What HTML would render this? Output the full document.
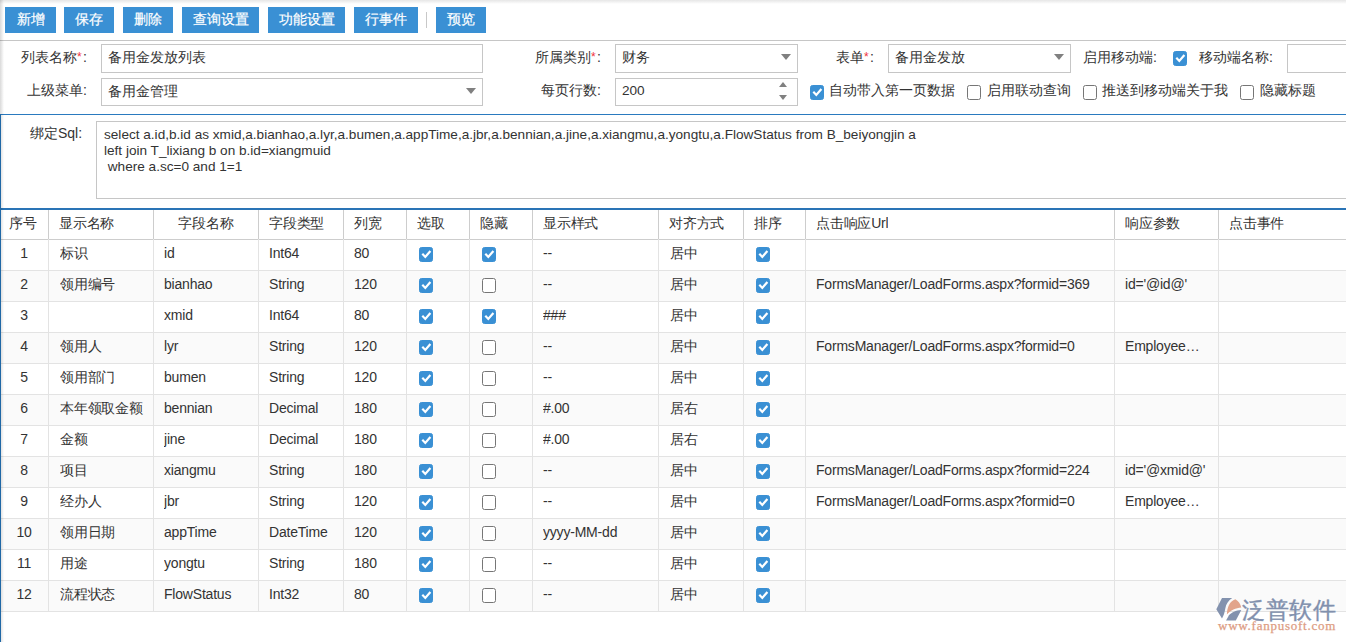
<!DOCTYPE html>
<html><head><meta charset="utf-8"><style>
html,body{margin:0;padding:0;}
body{width:1346px;height:642px;overflow:hidden;position:relative;background:#fff;font-family:"Liberation Sans",sans-serif;color:#333;font-size:14px;}
.a{position:absolute;white-space:nowrap;}
.shtop{position:absolute;left:0;top:0;width:1346px;height:4px;background:linear-gradient(#e6e6e6,#fff);}
.shleft{position:absolute;left:0;top:0;width:5px;height:642px;background:linear-gradient(90deg,rgba(0,0,0,0.15),rgba(0,0,0,0) 80%);}
.btn{position:absolute;top:7px;height:26px;line-height:24px;background:#3a90d4;color:#fff;text-align:center;font-size:14px;white-space:nowrap;-webkit-text-stroke:0.2px #fff;}
.tsep{position:absolute;top:12px;width:1px;height:16px;background:#c8c8c8;}
.hr{position:absolute;left:0;top:40px;width:1346px;height:1px;background:#c6c6c6;}
.lbl{position:absolute;white-space:nowrap;font-size:14px;color:#333;text-align:right;}
.req{color:#f0323c;font-size:12px;margin-left:0px;margin-right:1.5px;position:relative;top:-1px;}
.inp{position:absolute;box-sizing:border-box;border:1px solid #c6c6c6;background:#fff;white-space:nowrap;font-size:14px;color:#333;}
.tri{position:absolute;width:0;height:0;border-left:5px solid transparent;border-right:5px solid transparent;border-top:6px solid #808080;}
.triu{position:absolute;width:0;height:0;border-left:4px solid transparent;border-right:4px solid transparent;border-bottom:5px solid #808080;}
.trid{position:absolute;width:0;height:0;border-left:4px solid transparent;border-right:4px solid transparent;border-top:5px solid #808080;}
.cb{display:inline-block;box-sizing:border-box;width:14px;height:15px;border:1px solid #767676;border-radius:2.5px;background:#fff;vertical-align:top;position:relative;}
.cb.on{background:#3a90d4;border-color:#3a90d4;}
.cb svg{position:absolute;left:-1px;top:-1px;}
.c{position:absolute;white-space:nowrap;overflow:hidden;font-size:14px;letter-spacing:-0.2px;color:#333;}
.c .cb{margin-top:7px;}
.hd{font-size:14px;}
.ctr{text-align:center;}
.hl{position:absolute;left:0;width:1346px;height:1px;background:#e3e3e3;}
.vl{position:absolute;width:1px;background:#e3e3e3;}
.stripe{position:absolute;left:0;width:1346px;height:30px;background:#fafafa;}
.sql{font-size:13.6px;line-height:16px;color:#333;}
</style></head><body>
<div class="shtop"></div>
<div class="btn" style="left:5px;width:51px">新增</div>
<div class="btn" style="left:64px;width:50px">保存</div>
<div class="btn" style="left:123px;width:50px">删除</div>
<div class="btn" style="left:182px;width:77px">查询设置</div>
<div class="btn" style="left:268px;width:77px">功能设置</div>
<div class="btn" style="left:354px;width:64px">行事件</div>
<div class="tsep" style="left:426px"></div>
<div class="btn" style="left:436px;width:50px">预览</div>
<div class="hr"></div>

<div class="lbl" style="right:1259px;top:49px">列表名称<span class="req">*</span>:</div>
<div class="inp" style="left:101px;top:44px;width:382px;height:29px;"><span class="a" style="left:6px;top:4px">备用金发放列表</span></div>
<div class="lbl" style="right:1259px;top:82px">上级菜单:</div>
<div class="inp" style="left:101px;top:78px;width:382px;height:28px;"><span class="a" style="left:6px;top:4px">备用金管理</span><span class="tri" style="left:364px;top:9px"></span></div>

<div class="lbl" style="right:745px;top:49px">所属类别<span class="req">*</span>:</div>
<div class="inp" style="left:615px;top:44px;width:183px;height:29px;"><span class="a" style="left:6px;top:4px">财务</span><span class="tri" style="left:165px;top:9px"></span></div>
<div class="lbl" style="right:745px;top:82px">每页行数:</div>
<div class="inp" style="left:615px;top:78px;width:183px;height:28px;"><span class="a" style="left:6px;top:4px;font-size:13.6px">200</span><span class="triu" style="left:163px;top:3px"></span><span class="trid" style="left:163px;top:16px"></span></div>
<div class="a" style="left:810px;top:85px"><span class="cb on"><svg width="14" height="15" viewBox="0 0 14 15"><path d="M3.3 6.8 L6.3 9.9 L11.4 4.1" fill="none" stroke="#fff" stroke-width="2.2"/></svg></span></div>
<div class="lbl" style="left:829px;top:82px">自动带入第一页数据</div>
<div class="a" style="left:967px;top:85px"><span class="cb"></span></div>
<div class="lbl" style="left:987px;top:82px">启用联动查询</div>
<div class="a" style="left:1083px;top:85px"><span class="cb"></span></div>
<div class="lbl" style="left:1102px;top:82px">推送到移动端关于我</div>
<div class="a" style="left:1240px;top:85px"><span class="cb"></span></div>
<div class="lbl" style="left:1260px;top:82px">隐藏标题</div>

<div class="lbl" style="right:472px;top:49px">表单<span class="req">*</span>:</div>
<div class="inp" style="left:888px;top:44px;width:183px;height:29px;"><span class="a" style="left:6px;top:4px">备用金发放</span><span class="tri" style="left:165px;top:9px"></span></div>
<div class="lbl" style="left:1083px;top:49px">启用移动端:</div>
<div class="a" style="left:1173px;top:51px"><span class="cb on"><svg width="14" height="15" viewBox="0 0 14 15"><path d="M3.3 6.8 L6.3 9.9 L11.4 4.1" fill="none" stroke="#fff" stroke-width="2.2"/></svg></span></div>
<div class="lbl" style="left:1199px;top:49px">移动端名称:</div>
<div class="inp" style="left:1287px;top:44px;width:100px;height:29px;"></div>

<div class="a" style="left:0;top:114px;width:1346px;height:1px;background:#2a7abf"></div>
<div class="a" style="left:0;top:114px;width:1px;height:528px;background:#2a7abf"></div>
<div class="lbl" style="left:30px;top:125px">绑定Sql:</div>
<div class="inp" style="left:96px;top:121px;width:1300px;height:78px;"><div class="a sql" style="left:7px;top:5px">select a.id,b.id as xmid,a.bianhao,a.lyr,a.bumen,a.appTime,a.jbr,a.bennian,a.jine,a.xiangmu,a.yongtu,a.FlowStatus from B_beiyongjin a<br>left join T_lixiang b on b.id=xiangmuid<br>&nbsp;where a.sc=0 and 1=1</div></div>
<div class="a" style="left:0;top:208px;width:1346px;height:2px;background:#2a74b6"></div>

<div class="c hd" style="left:9px;top:210px;height:29px;line-height:27px">序号</div>
<div class="c hd" style="left:59px;top:210px;height:29px;line-height:27px">显示名称</div>
<div class="c hd ctr" style="left:154px;width:104px;top:210px;height:29px;line-height:27px">字段名称</div>
<div class="c hd" style="left:269px;top:210px;height:29px;line-height:27px">字段类型</div>
<div class="c hd" style="left:354px;top:210px;height:29px;line-height:27px">列宽</div>
<div class="c hd" style="left:417px;top:210px;height:29px;line-height:27px">选取</div>
<div class="c hd" style="left:480px;top:210px;height:29px;line-height:27px">隐藏</div>
<div class="c hd" style="left:543px;top:210px;height:29px;line-height:27px">显示样式</div>
<div class="c hd" style="left:669px;top:210px;height:29px;line-height:27px">对齐方式</div>
<div class="c hd" style="left:754px;top:210px;height:29px;line-height:27px">排序</div>
<div class="c hd" style="left:816px;top:210px;height:29px;line-height:27px">点击响应Url</div>
<div class="c hd" style="left:1125px;top:210px;height:29px;line-height:27px">响应参数</div>
<div class="c hd" style="left:1229px;top:210px;height:29px;line-height:27px">点击事件</div>
<div class="hl" style="top:239px;background:#cdcdcd"></div>
<div class="c ctr" style="left:0px;width:48px;top:240px;height:30px;line-height:27px">1</div>
<div class="c" style="left:60px;width:93px;top:240px;height:30px;line-height:27px">标识</div>
<div class="c" style="left:164px;width:94px;top:240px;height:30px;line-height:27px">id</div>
<div class="c" style="left:269px;width:74px;top:240px;height:30px;line-height:27px">Int64</div>
<div class="c" style="left:354px;width:52px;top:240px;height:30px;line-height:27px">80</div>
<div class="c" style="left:419px;top:240px;height:30px"><span class="cb on"><svg width="14" height="15" viewBox="0 0 14 15"><path d="M3.3 6.8 L6.3 9.9 L11.4 4.1" fill="none" stroke="#fff" stroke-width="2.2"/></svg></span></div>
<div class="c" style="left:482px;top:240px;height:30px"><span class="cb on"><svg width="14" height="15" viewBox="0 0 14 15"><path d="M3.3 6.8 L6.3 9.9 L11.4 4.1" fill="none" stroke="#fff" stroke-width="2.2"/></svg></span></div>
<div class="c" style="left:543px;width:115px;top:240px;height:30px;line-height:27px">--</div>
<div class="c" style="left:670px;width:73px;top:240px;height:30px;line-height:27px">居中</div>
<div class="c" style="left:756px;top:240px;height:30px"><span class="cb on"><svg width="14" height="15" viewBox="0 0 14 15"><path d="M3.3 6.8 L6.3 9.9 L11.4 4.1" fill="none" stroke="#fff" stroke-width="2.2"/></svg></span></div>
<div class="c" style="left:816px;width:298px;top:240px;height:30px;line-height:27px"></div>
<div class="c" style="left:1125px;width:93px;top:240px;height:30px;line-height:27px"></div>
<div class="hl" style="top:270px"></div>
<div class="stripe" style="top:271px"></div>
<div class="c ctr" style="left:0px;width:48px;top:271px;height:30px;line-height:27px">2</div>
<div class="c" style="left:60px;width:93px;top:271px;height:30px;line-height:27px">领用编号</div>
<div class="c" style="left:164px;width:94px;top:271px;height:30px;line-height:27px">bianhao</div>
<div class="c" style="left:269px;width:74px;top:271px;height:30px;line-height:27px">String</div>
<div class="c" style="left:354px;width:52px;top:271px;height:30px;line-height:27px">120</div>
<div class="c" style="left:419px;top:271px;height:30px"><span class="cb on"><svg width="14" height="15" viewBox="0 0 14 15"><path d="M3.3 6.8 L6.3 9.9 L11.4 4.1" fill="none" stroke="#fff" stroke-width="2.2"/></svg></span></div>
<div class="c" style="left:482px;top:271px;height:30px"><span class="cb"></span></div>
<div class="c" style="left:543px;width:115px;top:271px;height:30px;line-height:27px">--</div>
<div class="c" style="left:670px;width:73px;top:271px;height:30px;line-height:27px">居中</div>
<div class="c" style="left:756px;top:271px;height:30px"><span class="cb on"><svg width="14" height="15" viewBox="0 0 14 15"><path d="M3.3 6.8 L6.3 9.9 L11.4 4.1" fill="none" stroke="#fff" stroke-width="2.2"/></svg></span></div>
<div class="c" style="left:816px;width:298px;top:271px;height:30px;line-height:27px">FormsManager/LoadForms.aspx?formid=369</div>
<div class="c" style="left:1125px;width:93px;top:271px;height:30px;line-height:27px">id='@id@'</div>
<div class="hl" style="top:301px"></div>
<div class="c ctr" style="left:0px;width:48px;top:302px;height:30px;line-height:27px">3</div>
<div class="c" style="left:59px;width:94px;top:302px;height:30px;line-height:27px"></div>
<div class="c" style="left:164px;width:94px;top:302px;height:30px;line-height:27px">xmid</div>
<div class="c" style="left:269px;width:74px;top:302px;height:30px;line-height:27px">Int64</div>
<div class="c" style="left:354px;width:52px;top:302px;height:30px;line-height:27px">80</div>
<div class="c" style="left:419px;top:302px;height:30px"><span class="cb on"><svg width="14" height="15" viewBox="0 0 14 15"><path d="M3.3 6.8 L6.3 9.9 L11.4 4.1" fill="none" stroke="#fff" stroke-width="2.2"/></svg></span></div>
<div class="c" style="left:482px;top:302px;height:30px"><span class="cb on"><svg width="14" height="15" viewBox="0 0 14 15"><path d="M3.3 6.8 L6.3 9.9 L11.4 4.1" fill="none" stroke="#fff" stroke-width="2.2"/></svg></span></div>
<div class="c" style="left:543px;width:115px;top:302px;height:30px;line-height:27px">###</div>
<div class="c" style="left:670px;width:73px;top:302px;height:30px;line-height:27px">居中</div>
<div class="c" style="left:756px;top:302px;height:30px"><span class="cb on"><svg width="14" height="15" viewBox="0 0 14 15"><path d="M3.3 6.8 L6.3 9.9 L11.4 4.1" fill="none" stroke="#fff" stroke-width="2.2"/></svg></span></div>
<div class="c" style="left:816px;width:298px;top:302px;height:30px;line-height:27px"></div>
<div class="c" style="left:1125px;width:93px;top:302px;height:30px;line-height:27px"></div>
<div class="hl" style="top:332px"></div>
<div class="stripe" style="top:333px"></div>
<div class="c ctr" style="left:0px;width:48px;top:333px;height:30px;line-height:27px">4</div>
<div class="c" style="left:60px;width:93px;top:333px;height:30px;line-height:27px">领用人</div>
<div class="c" style="left:164px;width:94px;top:333px;height:30px;line-height:27px">lyr</div>
<div class="c" style="left:269px;width:74px;top:333px;height:30px;line-height:27px">String</div>
<div class="c" style="left:354px;width:52px;top:333px;height:30px;line-height:27px">120</div>
<div class="c" style="left:419px;top:333px;height:30px"><span class="cb on"><svg width="14" height="15" viewBox="0 0 14 15"><path d="M3.3 6.8 L6.3 9.9 L11.4 4.1" fill="none" stroke="#fff" stroke-width="2.2"/></svg></span></div>
<div class="c" style="left:482px;top:333px;height:30px"><span class="cb"></span></div>
<div class="c" style="left:543px;width:115px;top:333px;height:30px;line-height:27px">--</div>
<div class="c" style="left:670px;width:73px;top:333px;height:30px;line-height:27px">居中</div>
<div class="c" style="left:756px;top:333px;height:30px"><span class="cb on"><svg width="14" height="15" viewBox="0 0 14 15"><path d="M3.3 6.8 L6.3 9.9 L11.4 4.1" fill="none" stroke="#fff" stroke-width="2.2"/></svg></span></div>
<div class="c" style="left:816px;width:298px;top:333px;height:30px;line-height:27px">FormsManager/LoadForms.aspx?formid=0</div>
<div class="c" style="left:1125px;width:93px;top:333px;height:30px;line-height:27px">Employee…</div>
<div class="hl" style="top:363px"></div>
<div class="c ctr" style="left:0px;width:48px;top:364px;height:30px;line-height:27px">5</div>
<div class="c" style="left:60px;width:93px;top:364px;height:30px;line-height:27px">领用部门</div>
<div class="c" style="left:164px;width:94px;top:364px;height:30px;line-height:27px">bumen</div>
<div class="c" style="left:269px;width:74px;top:364px;height:30px;line-height:27px">String</div>
<div class="c" style="left:354px;width:52px;top:364px;height:30px;line-height:27px">120</div>
<div class="c" style="left:419px;top:364px;height:30px"><span class="cb on"><svg width="14" height="15" viewBox="0 0 14 15"><path d="M3.3 6.8 L6.3 9.9 L11.4 4.1" fill="none" stroke="#fff" stroke-width="2.2"/></svg></span></div>
<div class="c" style="left:482px;top:364px;height:30px"><span class="cb"></span></div>
<div class="c" style="left:543px;width:115px;top:364px;height:30px;line-height:27px">--</div>
<div class="c" style="left:670px;width:73px;top:364px;height:30px;line-height:27px">居中</div>
<div class="c" style="left:756px;top:364px;height:30px"><span class="cb on"><svg width="14" height="15" viewBox="0 0 14 15"><path d="M3.3 6.8 L6.3 9.9 L11.4 4.1" fill="none" stroke="#fff" stroke-width="2.2"/></svg></span></div>
<div class="c" style="left:816px;width:298px;top:364px;height:30px;line-height:27px"></div>
<div class="c" style="left:1125px;width:93px;top:364px;height:30px;line-height:27px"></div>
<div class="hl" style="top:394px"></div>
<div class="stripe" style="top:395px"></div>
<div class="c ctr" style="left:0px;width:48px;top:395px;height:30px;line-height:27px">6</div>
<div class="c" style="left:60px;width:93px;top:395px;height:30px;line-height:27px">本年领取金额</div>
<div class="c" style="left:164px;width:94px;top:395px;height:30px;line-height:27px">bennian</div>
<div class="c" style="left:269px;width:74px;top:395px;height:30px;line-height:27px">Decimal</div>
<div class="c" style="left:354px;width:52px;top:395px;height:30px;line-height:27px">180</div>
<div class="c" style="left:419px;top:395px;height:30px"><span class="cb on"><svg width="14" height="15" viewBox="0 0 14 15"><path d="M3.3 6.8 L6.3 9.9 L11.4 4.1" fill="none" stroke="#fff" stroke-width="2.2"/></svg></span></div>
<div class="c" style="left:482px;top:395px;height:30px"><span class="cb"></span></div>
<div class="c" style="left:543px;width:115px;top:395px;height:30px;line-height:27px">#.00</div>
<div class="c" style="left:670px;width:73px;top:395px;height:30px;line-height:27px">居右</div>
<div class="c" style="left:756px;top:395px;height:30px"><span class="cb on"><svg width="14" height="15" viewBox="0 0 14 15"><path d="M3.3 6.8 L6.3 9.9 L11.4 4.1" fill="none" stroke="#fff" stroke-width="2.2"/></svg></span></div>
<div class="c" style="left:816px;width:298px;top:395px;height:30px;line-height:27px"></div>
<div class="c" style="left:1125px;width:93px;top:395px;height:30px;line-height:27px"></div>
<div class="hl" style="top:425px"></div>
<div class="c ctr" style="left:0px;width:48px;top:426px;height:30px;line-height:27px">7</div>
<div class="c" style="left:60px;width:93px;top:426px;height:30px;line-height:27px">金额</div>
<div class="c" style="left:164px;width:94px;top:426px;height:30px;line-height:27px">jine</div>
<div class="c" style="left:269px;width:74px;top:426px;height:30px;line-height:27px">Decimal</div>
<div class="c" style="left:354px;width:52px;top:426px;height:30px;line-height:27px">180</div>
<div class="c" style="left:419px;top:426px;height:30px"><span class="cb on"><svg width="14" height="15" viewBox="0 0 14 15"><path d="M3.3 6.8 L6.3 9.9 L11.4 4.1" fill="none" stroke="#fff" stroke-width="2.2"/></svg></span></div>
<div class="c" style="left:482px;top:426px;height:30px"><span class="cb"></span></div>
<div class="c" style="left:543px;width:115px;top:426px;height:30px;line-height:27px">#.00</div>
<div class="c" style="left:670px;width:73px;top:426px;height:30px;line-height:27px">居右</div>
<div class="c" style="left:756px;top:426px;height:30px"><span class="cb on"><svg width="14" height="15" viewBox="0 0 14 15"><path d="M3.3 6.8 L6.3 9.9 L11.4 4.1" fill="none" stroke="#fff" stroke-width="2.2"/></svg></span></div>
<div class="c" style="left:816px;width:298px;top:426px;height:30px;line-height:27px"></div>
<div class="c" style="left:1125px;width:93px;top:426px;height:30px;line-height:27px"></div>
<div class="hl" style="top:456px"></div>
<div class="stripe" style="top:457px"></div>
<div class="c ctr" style="left:0px;width:48px;top:457px;height:30px;line-height:27px">8</div>
<div class="c" style="left:60px;width:93px;top:457px;height:30px;line-height:27px">项目</div>
<div class="c" style="left:164px;width:94px;top:457px;height:30px;line-height:27px">xiangmu</div>
<div class="c" style="left:269px;width:74px;top:457px;height:30px;line-height:27px">String</div>
<div class="c" style="left:354px;width:52px;top:457px;height:30px;line-height:27px">180</div>
<div class="c" style="left:419px;top:457px;height:30px"><span class="cb on"><svg width="14" height="15" viewBox="0 0 14 15"><path d="M3.3 6.8 L6.3 9.9 L11.4 4.1" fill="none" stroke="#fff" stroke-width="2.2"/></svg></span></div>
<div class="c" style="left:482px;top:457px;height:30px"><span class="cb"></span></div>
<div class="c" style="left:543px;width:115px;top:457px;height:30px;line-height:27px">--</div>
<div class="c" style="left:670px;width:73px;top:457px;height:30px;line-height:27px">居中</div>
<div class="c" style="left:756px;top:457px;height:30px"><span class="cb on"><svg width="14" height="15" viewBox="0 0 14 15"><path d="M3.3 6.8 L6.3 9.9 L11.4 4.1" fill="none" stroke="#fff" stroke-width="2.2"/></svg></span></div>
<div class="c" style="left:816px;width:298px;top:457px;height:30px;line-height:27px">FormsManager/LoadForms.aspx?formid=224</div>
<div class="c" style="left:1125px;width:93px;top:457px;height:30px;line-height:27px">id='@xmid@'</div>
<div class="hl" style="top:487px"></div>
<div class="c ctr" style="left:0px;width:48px;top:488px;height:30px;line-height:27px">9</div>
<div class="c" style="left:60px;width:93px;top:488px;height:30px;line-height:27px">经办人</div>
<div class="c" style="left:164px;width:94px;top:488px;height:30px;line-height:27px">jbr</div>
<div class="c" style="left:269px;width:74px;top:488px;height:30px;line-height:27px">String</div>
<div class="c" style="left:354px;width:52px;top:488px;height:30px;line-height:27px">120</div>
<div class="c" style="left:419px;top:488px;height:30px"><span class="cb on"><svg width="14" height="15" viewBox="0 0 14 15"><path d="M3.3 6.8 L6.3 9.9 L11.4 4.1" fill="none" stroke="#fff" stroke-width="2.2"/></svg></span></div>
<div class="c" style="left:482px;top:488px;height:30px"><span class="cb"></span></div>
<div class="c" style="left:543px;width:115px;top:488px;height:30px;line-height:27px">--</div>
<div class="c" style="left:670px;width:73px;top:488px;height:30px;line-height:27px">居中</div>
<div class="c" style="left:756px;top:488px;height:30px"><span class="cb on"><svg width="14" height="15" viewBox="0 0 14 15"><path d="M3.3 6.8 L6.3 9.9 L11.4 4.1" fill="none" stroke="#fff" stroke-width="2.2"/></svg></span></div>
<div class="c" style="left:816px;width:298px;top:488px;height:30px;line-height:27px">FormsManager/LoadForms.aspx?formid=0</div>
<div class="c" style="left:1125px;width:93px;top:488px;height:30px;line-height:27px">Employee…</div>
<div class="hl" style="top:518px"></div>
<div class="stripe" style="top:519px"></div>
<div class="c ctr" style="left:0px;width:48px;top:519px;height:30px;line-height:27px">10</div>
<div class="c" style="left:60px;width:93px;top:519px;height:30px;line-height:27px">领用日期</div>
<div class="c" style="left:164px;width:94px;top:519px;height:30px;line-height:27px">appTime</div>
<div class="c" style="left:269px;width:74px;top:519px;height:30px;line-height:27px">DateTime</div>
<div class="c" style="left:354px;width:52px;top:519px;height:30px;line-height:27px">120</div>
<div class="c" style="left:419px;top:519px;height:30px"><span class="cb on"><svg width="14" height="15" viewBox="0 0 14 15"><path d="M3.3 6.8 L6.3 9.9 L11.4 4.1" fill="none" stroke="#fff" stroke-width="2.2"/></svg></span></div>
<div class="c" style="left:482px;top:519px;height:30px"><span class="cb"></span></div>
<div class="c" style="left:543px;width:115px;top:519px;height:30px;line-height:27px">yyyy-MM-dd</div>
<div class="c" style="left:670px;width:73px;top:519px;height:30px;line-height:27px">居中</div>
<div class="c" style="left:756px;top:519px;height:30px"><span class="cb on"><svg width="14" height="15" viewBox="0 0 14 15"><path d="M3.3 6.8 L6.3 9.9 L11.4 4.1" fill="none" stroke="#fff" stroke-width="2.2"/></svg></span></div>
<div class="c" style="left:816px;width:298px;top:519px;height:30px;line-height:27px"></div>
<div class="c" style="left:1125px;width:93px;top:519px;height:30px;line-height:27px"></div>
<div class="hl" style="top:549px"></div>
<div class="c ctr" style="left:0px;width:48px;top:550px;height:30px;line-height:27px">11</div>
<div class="c" style="left:60px;width:93px;top:550px;height:30px;line-height:27px">用途</div>
<div class="c" style="left:164px;width:94px;top:550px;height:30px;line-height:27px">yongtu</div>
<div class="c" style="left:269px;width:74px;top:550px;height:30px;line-height:27px">String</div>
<div class="c" style="left:354px;width:52px;top:550px;height:30px;line-height:27px">180</div>
<div class="c" style="left:419px;top:550px;height:30px"><span class="cb on"><svg width="14" height="15" viewBox="0 0 14 15"><path d="M3.3 6.8 L6.3 9.9 L11.4 4.1" fill="none" stroke="#fff" stroke-width="2.2"/></svg></span></div>
<div class="c" style="left:482px;top:550px;height:30px"><span class="cb"></span></div>
<div class="c" style="left:543px;width:115px;top:550px;height:30px;line-height:27px">--</div>
<div class="c" style="left:670px;width:73px;top:550px;height:30px;line-height:27px">居中</div>
<div class="c" style="left:756px;top:550px;height:30px"><span class="cb on"><svg width="14" height="15" viewBox="0 0 14 15"><path d="M3.3 6.8 L6.3 9.9 L11.4 4.1" fill="none" stroke="#fff" stroke-width="2.2"/></svg></span></div>
<div class="c" style="left:816px;width:298px;top:550px;height:30px;line-height:27px"></div>
<div class="c" style="left:1125px;width:93px;top:550px;height:30px;line-height:27px"></div>
<div class="hl" style="top:580px"></div>
<div class="stripe" style="top:581px"></div>
<div class="c ctr" style="left:0px;width:48px;top:581px;height:30px;line-height:27px">12</div>
<div class="c" style="left:60px;width:93px;top:581px;height:30px;line-height:27px">流程状态</div>
<div class="c" style="left:164px;width:94px;top:581px;height:30px;line-height:27px">FlowStatus</div>
<div class="c" style="left:269px;width:74px;top:581px;height:30px;line-height:27px">Int32</div>
<div class="c" style="left:354px;width:52px;top:581px;height:30px;line-height:27px">80</div>
<div class="c" style="left:419px;top:581px;height:30px"><span class="cb on"><svg width="14" height="15" viewBox="0 0 14 15"><path d="M3.3 6.8 L6.3 9.9 L11.4 4.1" fill="none" stroke="#fff" stroke-width="2.2"/></svg></span></div>
<div class="c" style="left:482px;top:581px;height:30px"><span class="cb"></span></div>
<div class="c" style="left:543px;width:115px;top:581px;height:30px;line-height:27px">--</div>
<div class="c" style="left:670px;width:73px;top:581px;height:30px;line-height:27px">居中</div>
<div class="c" style="left:756px;top:581px;height:30px"><span class="cb on"><svg width="14" height="15" viewBox="0 0 14 15"><path d="M3.3 6.8 L6.3 9.9 L11.4 4.1" fill="none" stroke="#fff" stroke-width="2.2"/></svg></span></div>
<div class="c" style="left:816px;width:298px;top:581px;height:30px;line-height:27px"></div>
<div class="c" style="left:1125px;width:93px;top:581px;height:30px;line-height:27px"></div>
<div class="hl" style="top:611px"></div>
<div class="vl" style="left:48px;top:210px;height:29px;background:#cdcdcd"></div>
<div class="vl" style="left:48px;top:239px;height:372px"></div>
<div class="vl" style="left:153px;top:210px;height:29px;background:#cdcdcd"></div>
<div class="vl" style="left:153px;top:239px;height:372px"></div>
<div class="vl" style="left:258px;top:210px;height:29px;background:#cdcdcd"></div>
<div class="vl" style="left:258px;top:239px;height:372px"></div>
<div class="vl" style="left:343px;top:210px;height:29px;background:#cdcdcd"></div>
<div class="vl" style="left:343px;top:239px;height:372px"></div>
<div class="vl" style="left:406px;top:210px;height:29px;background:#cdcdcd"></div>
<div class="vl" style="left:406px;top:239px;height:372px"></div>
<div class="vl" style="left:469px;top:210px;height:29px;background:#cdcdcd"></div>
<div class="vl" style="left:469px;top:239px;height:372px"></div>
<div class="vl" style="left:532px;top:210px;height:29px;background:#cdcdcd"></div>
<div class="vl" style="left:532px;top:239px;height:372px"></div>
<div class="vl" style="left:658px;top:210px;height:29px;background:#cdcdcd"></div>
<div class="vl" style="left:658px;top:239px;height:372px"></div>
<div class="vl" style="left:743px;top:210px;height:29px;background:#cdcdcd"></div>
<div class="vl" style="left:743px;top:239px;height:372px"></div>
<div class="vl" style="left:805px;top:210px;height:29px;background:#cdcdcd"></div>
<div class="vl" style="left:805px;top:239px;height:372px"></div>
<div class="vl" style="left:1114px;top:210px;height:29px;background:#cdcdcd"></div>
<div class="vl" style="left:1114px;top:239px;height:372px"></div>
<div class="vl" style="left:1218px;top:210px;height:29px;background:#cdcdcd"></div>
<div class="vl" style="left:1218px;top:239px;height:372px"></div>

<svg class="a" style="left:1214px;top:594px" width="126" height="40" viewBox="1214 594 126 40">
<path d="M1222 598 L1232.2 598 C1228.5 600.5 1226 604 1225.3 608.5 C1224.7 612.5 1223.6 615.8 1222 618.4 L1216.3 609.2 Z" fill="#8392ae"/>
<path d="M1226.9 614.4 C1227 608 1229.5 601 1235.4 599.3 C1238.3 600.8 1240.3 604 1241.3 607.4 C1236 607.6 1230.5 610.5 1226.9 614.4 Z" fill="#e2a48b"/>
<path d="M1226 620.5 L1235.8 620.5 L1241.3 610 C1236 610.2 1231 612.8 1229 615.3 Z" fill="#8392ae"/>
</svg>
<div class="a" style="left:1242px;top:595px;font-size:23px;line-height:30px;color:#8190ad;letter-spacing:0.6px;-webkit-text-stroke:0.4px #8190ad">泛普软件</div>
<div class="a" style="left:1218px;top:619px;font-family:'Liberation Serif',serif;font-size:13px;line-height:14px;color:#dd9c82;letter-spacing:0.75px;-webkit-text-stroke:0.25px #dd9c82">www.fanpusoft.com</div>

<div class="shleft"></div>
<div class="a" style="left:0;top:114px;width:1px;height:528px;background:#2068a6"></div>
</body></html>
